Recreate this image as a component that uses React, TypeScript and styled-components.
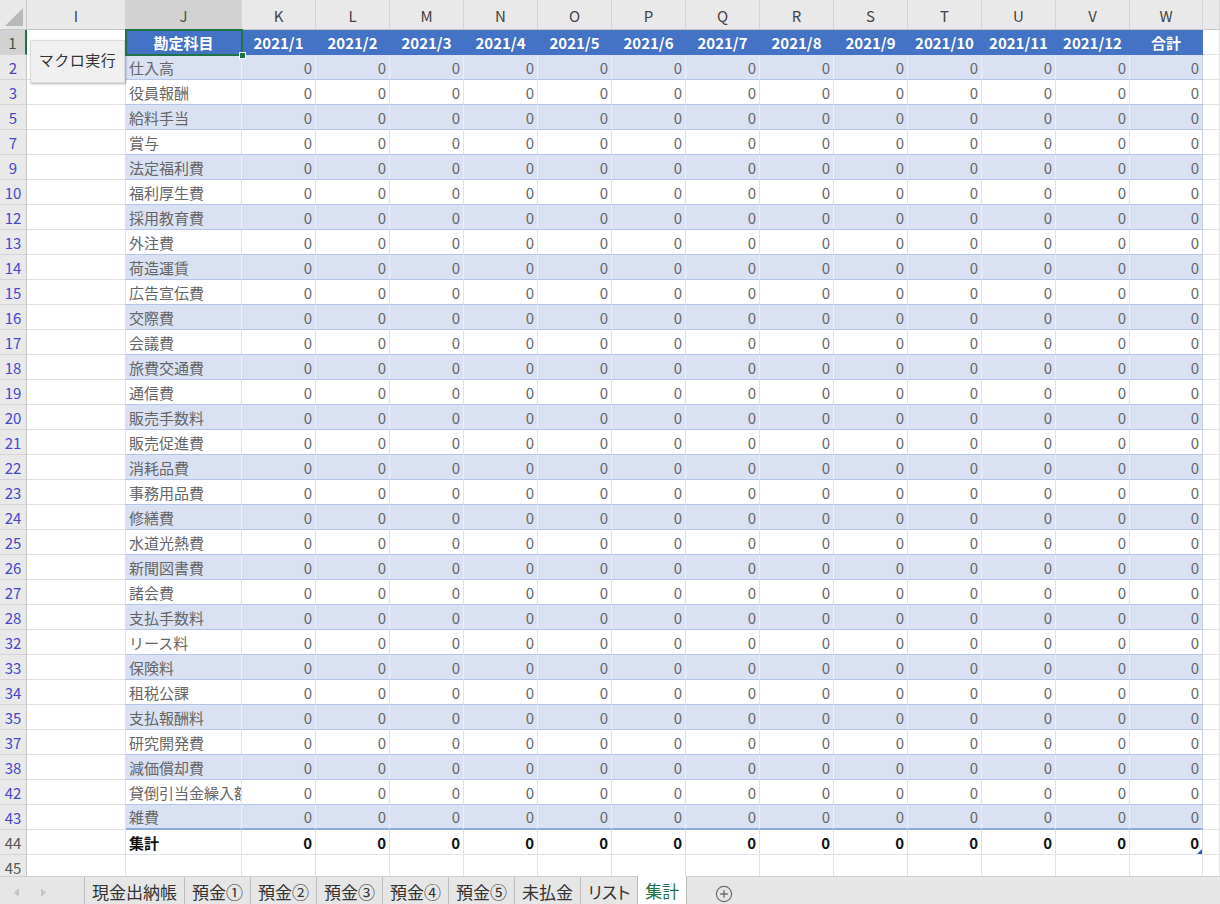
import React from 'react';
import styled, { createGlobalStyle, css } from 'styled-components';

const GlobalStyle = createGlobalStyle`
  html, body {
    margin: 0;
    padding: 0;
    width: 1220px;
    height: 904px;
    overflow: hidden;
    background: #ffffff;
    font-family: "Noto Sans CJK JP", "Noto Sans", sans-serif;
  }
`;

type Kind = 'plain' | 'head' | 'band' | 'white' | 'total';

const GREEN = '#217346';

const Page = styled.div`
  display: flex;
  flex-direction: column;
  width: 1220px;
  height: 904px;
`;

const Sheet = styled.div`
  position: relative;
  display: grid;
  grid-template-columns: 27px 99px 116px repeat(12, 74px) 73px 1fr;
  grid-template-rows: 30px repeat(34, 25px);
  overflow: hidden;
`;

const Corner = styled.div`
  position: relative;
  background: #e9e9e9;
  border-right: 1px solid #c6c6c6;
  border-bottom: 1px solid #c6c6c6;
  box-sizing: border-box;

  &::after {
    content: '';
    position: absolute;
    right: 3px;
    bottom: 3px;
    width: 0;
    height: 0;
    border-left: 18px solid transparent;
    border-bottom: 18px solid #b9b9b9;
  }
`;

const ColHead = styled.div<{ $sel?: boolean }>`
  box-sizing: border-box;
  display: flex;
  align-items: center;
  justify-content: center;
  background: ${(p) => (p.$sel ? '#d2d2d2' : '#e9e9e9')};
  border-right: 1px solid #d4d4d4;
  border-bottom: 1px solid #c6c6c6;
  color: ${(p) => (p.$sel ? '#3a5a3a' : '#444')};
  font-size: 15px;
  padding-top: 2px;
`;

const RowHead = styled.div<{ $sel?: boolean; $filtered?: boolean }>`
  box-sizing: border-box;
  display: flex;
  align-items: center;
  justify-content: center;
  background: ${(p) => (p.$sel ? '#d2d2d2' : '#e9e9e9')};
  border-right: ${(p) => (p.$sel ? `2px solid ${GREEN}` : '1px solid #c6c6c6')};
  border-bottom: 1px solid #d4d4d4;
  color: ${(p) => (p.$filtered ? '#4747cc' : p.$sel ? '#3a5a3a' : '#555')};
  font-size: 15px;
`;

const kindStyles: Record<Kind, ReturnType<typeof css>> = {
  plain: css`
    background: #fff;
    border-right: 1px solid #e1e1e1;
    border-bottom: 1px solid #e1e1e1;
  `,
  head: css`
    background: #4472c4;
    color: #fff;
    font-weight: 700;
    border-right: 1px solid #4472c4;
    border-bottom: 1px solid #4472c4;
    justify-content: center;
  `,
  band: css`
    background: #d9e1f2;
    color: #666;
    border-right: 1px solid #eaeef7;
    border-bottom: 1px solid #b4c6e7;
  `,
  white: css`
    background: #fff;
    color: #666;
    border-right: 1px solid #e1e1e1;
    border-bottom: 1px solid #b4c6e7;
  `,
  total: css`
    background: #fff;
    color: #111;
    font-weight: 700;
    border-right: 1px solid #e1e1e1;
    border-bottom: 1px solid #dfe3ea;
  `,
};

const Cell = styled.div<{ $kind: Kind; $num?: boolean; $last?: boolean; $edge?: boolean; $handle?: boolean }>`
  position: relative;
  box-sizing: border-box;
  display: flex;
  align-items: center;
  justify-content: ${(p) => (p.$num ? 'flex-end' : 'flex-start')};
  padding: 0 3px;
  overflow: hidden;
  white-space: nowrap;
  font-size: 15px;
  ${(p) => kindStyles[p.$kind]}
  ${(p) => p.$last && css`border-bottom: 2px solid #8ea9db;`}
  ${(p) => p.$edge && css`border-right: 1px solid #c9cfdb;`}
  ${(p) =>
    p.$handle &&
    css`
      &::after {
        content: '';
        position: absolute;
        right: 0;
        bottom: 0;
        width: 0;
        height: 0;
        border-left: 5px solid transparent;
        border-bottom: 5px solid #2f55b8;
      }
    `}
`;

const Selection = styled.div`
  position: absolute;
  left: 125px;
  top: 29px;
  width: 118px;
  height: 27px;
  box-sizing: border-box;
  border: 2px solid ${GREEN};
  pointer-events: none;

  &::after {
    content: '';
    position: absolute;
    right: -5px;
    bottom: -5px;
    width: 5px;
    height: 5px;
    background: ${GREEN};
    border: 1px solid #fff;
  }
`;

const MacroButton = styled.button`
  position: absolute;
  left: 30px;
  top: 40px;
  width: 95px;
  height: 43px;
  background: #f0f0f0;
  border: 1px solid #dadada;
  border-radius: 0;
  box-shadow: 1px 1px 2px rgba(0, 0, 0, 0.3);
  font-family: "Noto Sans CJK JP", sans-serif;
  font-size: 15px;
  letter-spacing: 0.5px;
  color: #333;
  padding: 0 0 4px;
`;

const TabBar = styled.div`
  flex: 1;
  display: flex;
  align-items: stretch;
  background: #e6e6e6;
  border-top: 1px solid #cfcfcf;
`;

const Nav = styled.div`
  width: 84px;
  display: flex;
  align-items: center;
  gap: 20px;
  padding: 3px 0 0 14px;
  box-sizing: border-box;
`;

const Tab = styled.div<{ $active?: boolean; $first?: boolean }>`
  display: flex;
  align-items: flex-start;
  padding: 3px 7px 0;
  font-size: 17px;
  line-height: 24px;
  font-feature-settings: 'palt';
  color: ${(p) => (p.$active ? GREEN : '#333')};
  background: ${(p) => (p.$active ? '#fff' : 'transparent')};
  border-right: 1px solid #bdbdbd;
  border-left: ${(p) => (p.$first ? '1px solid #bdbdbd' : 'none')};
  margin-top: ${(p) => (p.$active ? '-1px' : '0')};
`;

const AddSheet = styled.div`
  display: flex;
  align-items: center;
  padding: 6px 0 0 28px;
`;

const months = Array.from({ length: 12 }, (_, i) => `2021/${i + 1}`);
const headers = ['勘定科目', ...months, '合計'];
const letters = ['I', 'J', 'K', 'L', 'M', 'N', 'O', 'P', 'Q', 'R', 'S', 'T', 'U', 'V', 'W', ''];

const accounts: [number, string][] = [
  [2, '仕入高'], [3, '役員報酬'], [5, '給料手当'], [7, '賞与'], [9, '法定福利費'],
  [10, '福利厚生費'], [12, '採用教育費'], [13, '外注費'], [14, '荷造運賃'], [15, '広告宣伝費'],
  [16, '交際費'], [17, '会議費'], [18, '旅費交通費'], [19, '通信費'], [20, '販売手数料'],
  [21, '販売促進費'], [22, '消耗品費'], [23, '事務用品費'], [24, '修繕費'], [25, '水道光熱費'],
  [26, '新聞図書費'], [27, '諸会費'], [28, '支払手数料'], [32, 'リース料'], [33, '保険料'],
  [34, '租税公課'], [35, '支払報酬料'], [37, '研究開発費'], [38, '減価償却費'],
  [42, '貸倒引当金繰入額'], [43, '雑費'],
];

const tabs = ['現金出納帳', '預金①', '預金②', '預金③', '預金④', '預金⑤', '未払金', 'リスト', '集計'];

const Arrow: React.FC<{ dir: 'left' | 'right' }> = ({ dir }) => (
  <svg width="6" height="9" viewBox="0 0 6 9">
    <path d={dir === 'left' ? 'M5 0 L0 4.5 L5 9 Z' : 'M1 0 L6 4.5 L1 9 Z'} fill="#c4c4c4" />
  </svg>
);

const PlusCircle = () => (
  <svg width="18" height="18" viewBox="0 0 18 18">
    <circle cx="9" cy="9" r="7.6" fill="none" stroke="#6d6d6d" strokeWidth="1.2" />
    <path d="M9 5.2 V12.8 M5.2 9 H12.8" stroke="#6d6d6d" strokeWidth="1.4" />
  </svg>
);

const App: React.FC = () => {
  return (
    <>
      <GlobalStyle />
      <Page>
        <Sheet>
          <Corner />
          {letters.map((l, i) => (
            <ColHead key={`h${i}`} $sel={l === 'J'}>
              {l}
            </ColHead>
          ))}

          <RowHead $sel>1</RowHead>
          <Cell $kind="plain" />
          {headers.map((h) => (
            <Cell key={h} $kind="head">
              {h}
            </Cell>
          ))}
          <Cell $kind="plain" />

          {accounts.map(([row, name], idx) => {
            const kind: Kind = idx % 2 === 0 ? 'band' : 'white';
            const last = idx === accounts.length - 1;
            return (
              <React.Fragment key={row}>
                <RowHead $filtered>{row}</RowHead>
                <Cell $kind="plain" />
                <Cell $kind={kind} $last={last}>
                  {name}
                </Cell>
                {headers.slice(1).map((h, j) => (
                  <Cell key={h} $kind={kind} $num $last={last} $edge={j === 12}>
                    0
                  </Cell>
                ))}
                <Cell $kind="plain" />
              </React.Fragment>
            );
          })}

          <RowHead>44</RowHead>
          <Cell $kind="plain" />
          <Cell $kind="total">集計</Cell>
          {headers.slice(1).map((h, j) => (
            <Cell key={h} $kind="total" $num $handle={j === 12}>
              0
            </Cell>
          ))}
          <Cell $kind="plain" />

          <RowHead>45</RowHead>
          {letters.map((l, i) => (
            <Cell key={`e${i}`} $kind="plain" />
          ))}

          <MacroButton>マクロ実行</MacroButton>
          <Selection />
        </Sheet>

        <TabBar>
          <Nav>
            <Arrow dir="left" />
            <Arrow dir="right" />
          </Nav>
          {tabs.map((t, i) => (
            <Tab key={t} $first={i === 0} $active={t === '集計'}>
              {t}
            </Tab>
          ))}
          <AddSheet>
            <PlusCircle />
          </AddSheet>
        </TabBar>
      </Page>
    </>
  );
};

export default App;
